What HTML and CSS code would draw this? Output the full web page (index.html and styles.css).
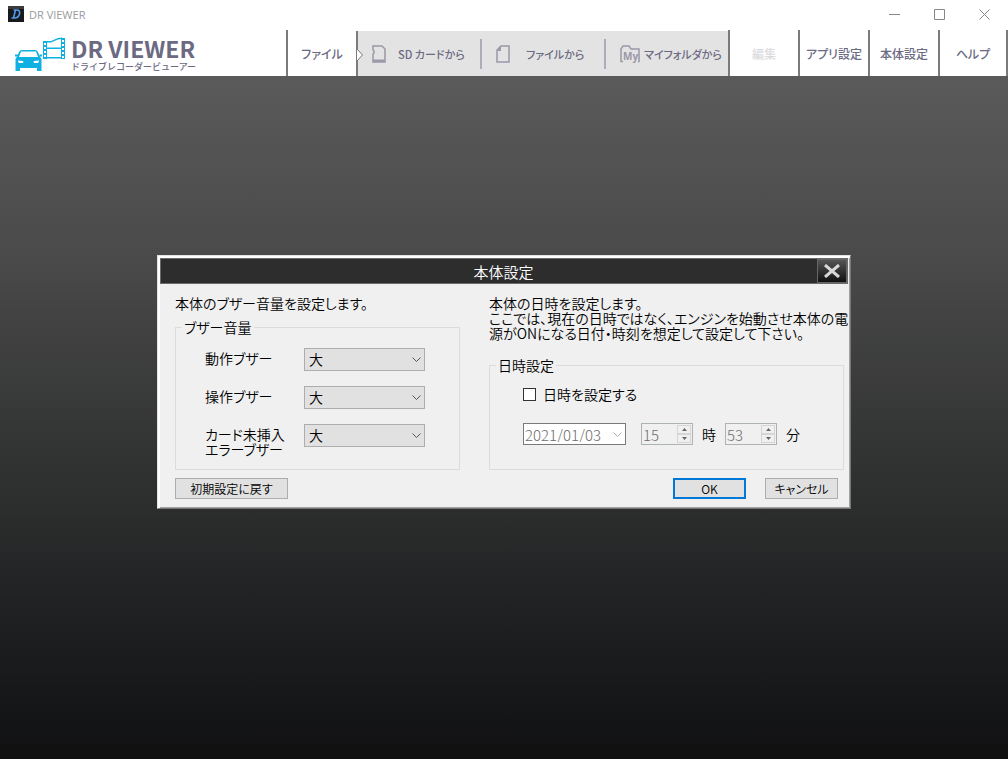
FILE: index.html
```html
<!DOCTYPE html>
<html lang="ja">
<head>
    <meta charset="UTF-8">
    <title>DR VIEWER</title>
    <link rel="stylesheet" href="styles.css">
</head>
<body>
<div class="titlebar">
    <svg class="app-icon" width="16" height="16" viewBox="0 0 16 16">
        <rect width="16" height="16" fill="#17191d"/>
        <path d="M0 0h16v3H0z" fill="#3a3c40"/>
        <path d="M5.500 4h3q4 0 3 4t-5 4H3.500M7.500 4l-2 8" fill="none" stroke="#4f9be8" stroke-width="1.600"/>
    </svg>
    <span class="app-name">DR VIEWER</span>
    <div class="win-btns">
        <button type="button" aria-label="最小化"><svg width="11" height="11"><path d="M0 5.500h11" stroke="#888"/></svg></button>
        <button type="button" aria-label="最大化"><svg width="11" height="11"><path d="M.5.5h10v10H.5z" fill="none" stroke="#888"/></svg></button>
        <button type="button" aria-label="閉じる"><svg width="11" height="11"><path d="M.5.5l10 10M10.500.5l-10 10" stroke="#888"/></svg></button>
    </div>
</div>
<div class="header">
    <div class="logo">
        <svg width="52" height="36" viewBox="0 0 52 36">
            <g fill="#0fb0e2">
                <path d="M7 14h13q2 0 3 2l2 5q1 .5 1.500 2v12H22v-3H5v3H.5V23Q1 21.500 2 21l2-5q1-2 3-2zM6 15.500L4 21h19l-2-5.500z" fill-rule="evenodd"/>
                <path d="M0 18.500h3v2H0zM24.500 18.500h2.500v2h-2.500z"/>
                <path d="M28 5h4v18h-4zM46 2h4v21h-4z"/>
                <path d="M31 5h5l7-3 4-.5V3l-4 .5L36 6.500h-5zM31 11.500h16V13H31zM31 21h16v1.500H31z"/>
            </g>
            <path d="M3 24.500l5 .5q1 1 0 2H4q-1-1-1-2.500zM24 24.500l-5 .5q-1 1 0 2h4q1-1 1-2.500z" fill="#fff"/>
            <path d="M30 7v15M48 4v18" stroke="#fff" stroke-width="2" stroke-dasharray="2 2"/>
        </svg>
        <div class="logo-text">
            <div class="logo-name">DR VIEWER</div>
            <div class="logo-sub">ドライブレコーダービューアー</div>
        </div>
    </div>
    <div class="menu">
        <button type="button" class="item">ファイル</button>
        <div class="submenu">
            <svg class="arrow" width="7" height="14" viewBox="0 0 7 14"><path d="M0 1l5.500 6L0 13" fill="#fff" stroke="#777"/></svg>
            <button type="button" class="sub sub-sd">
                <svg width="14" height="18" viewBox="0 0 14 18"><path d="M2 1h8l3 3v13H1v-8l1-1V6L1 5V1z" fill="none" stroke="#9b98a8" stroke-width="1.500"/><path d="M1 14.500h12V17H1z" fill="#9b98a8"/></svg>
                SD カードから
            </button>
            <button type="button" class="sub sub-file">
                <svg width="14" height="18" viewBox="0 0 14 18"><path d="M5 1h8v16H1V5z" fill="none" stroke="#9b98a8" stroke-width="1.500"/><path d="M5 1v5H1z" fill="#9b98a8"/></svg>
                ファイルから
            </button>
            <button type="button" class="sub sub-my">
                <svg width="20" height="18" viewBox="0 0 20 18"><path d="M3 16.500H1V4l2-3h6l2 3h8v12.500h-1" fill="none" stroke="#9b98a8" stroke-width="1.500"/><text class="my" x="3" y="15">My</text></svg>
                マイフォルダから
            </button>
        </div>
        <button type="button" class="item" disabled>編集</button>
        <button type="button" class="item">アプリ設定</button>
        <button type="button" class="item">本体設定</button>
        <button type="button" class="item item-last">ヘルプ</button>
    </div>
</div>
<div class="main">
    <form class="dialog">
        <div class="dialog-title">
            <span>本体設定</span>
            <button type="button" class="close" aria-label="閉じる"><svg width="18" height="14" viewBox="0 0 18 14"><path d="M2 1l14 12M16 1L2 13" stroke="#d8d8d8" stroke-width="3"/></svg></button>
        </div>
        <div class="dialog-body">
            <div class="col-buzzer">
                <p>本体のブザー音量を設定します。</p>
                <fieldset>
                    <legend>ブザー音量</legend>
                    <div class="buzzer">
                        <div class="row">
                            <label for="buzzer1">動作ブザー</label>
                            <span class="select"><select id="buzzer1"><option>大</option><option>中</option><option>小</option></select><svg width="9" height="5"><path d="M.5.5l4 4 4-4" fill="none" stroke="#555"/></svg></span>
                        </div>
                        <div class="row">
                            <label for="buzzer2">操作ブザー</label>
                            <span class="select"><select id="buzzer2"><option>大</option><option>中</option><option>小</option></select><svg width="9" height="5"><path d="M.5.5l4 4 4-4" fill="none" stroke="#555"/></svg></span>
                        </div>
                        <div class="row">
                            <label for="buzzer3">カード未挿入<br>エラーブザー</label>
                            <span class="select"><select id="buzzer3"><option>大</option><option>中</option><option>小</option></select><svg width="9" height="5"><path d="M.5.5l4 4 4-4" fill="none" stroke="#555"/></svg></span>
                        </div>
                    </div>
                </fieldset>
            </div>
            <div class="col-date">
                <p>本体の日時を設定します。<br>ここでは、現在の日時ではなく、エンジンを始動させ本体の電<br>源がONになる日付・時刻を想定して設定して下さい。</p>
                <fieldset>
                    <legend>日時設定</legend>
                    <div class="datetime">
                        <div class="check">
                            <input type="checkbox" id="setdate">
                            <label for="setdate">日時を設定する</label>
                        </div>
                        <div class="date-row">
                            <span class="select date"><select aria-label="日付" disabled><option>2021/01/03</option></select><svg width="9" height="5"><path d="M.5.5l4 4 4-4" fill="none" stroke="#aaa"/></svg></span>
                            <span class="spin">
                                <input type="text" id="hour" value="15" disabled>
                                <span class="spin-btns">
                                    <button type="button" aria-label="時を増やす" disabled><svg width="5" height="3"><path d="M0 3l2.500-3L5 3z" fill="#666"/></svg></button>
                                    <button type="button" aria-label="時を減らす" disabled><svg width="5" height="3"><path d="M0 0l2.500 3L5 0z" fill="#666"/></svg></button>
                                </span>
                            </span>
                            <label for="hour">時</label>
                            <span class="spin">
                                <input type="text" id="minute" value="53" disabled>
                                <span class="spin-btns">
                                    <button type="button" aria-label="分を増やす" disabled><svg width="5" height="3"><path d="M0 3l2.500-3L5 3z" fill="#666"/></svg></button>
                                    <button type="button" aria-label="分を減らす" disabled><svg width="5" height="3"><path d="M0 0l2.500 3L5 0z" fill="#666"/></svg></button>
                                </span>
                            </span>
                            <label for="minute">分</label>
                        </div>
                    </div>
                </fieldset>
            </div>
        </div>
        <div class="dialog-foot">
            <button type="button" class="btn btn-reset">初期設定に戻す</button>
            <button type="submit" class="btn btn-ok">OK</button>
            <button type="button" class="btn">キャンセル</button>
        </div>
    </form>
</div>
</body>
</html>
```
FILE: styles.css
```css
*{
    margin: 0;
    padding: 0;
    box-sizing: border-box;
}
body{
    display: flex;
    flex-direction: column;
    min-height: 100vh;
    background: #fff;
    font-family: "Noto Sans CJK JP", sans-serif;
    font-feature-settings: "palt";
}
button,input,select{
    font: inherit;
    font-feature-settings: inherit;
    color: inherit;
    border: 0;
    border-radius: 0;
    background: none;
}
svg{
    display: block;
    flex: none;
}

/* window title bar */
.titlebar{
    display: flex;
    align-items: center;
    height: 30px;
    padding: 0 1px 2px 8px;
}
.app-name{
    margin-left: 5px;
    font: 11px "Open Sans", sans-serif;
    color: #999;
}
.win-btns{
    display: flex;
    margin-left: auto;
}
.win-btns button{
    display: flex;
    justify-content: center;
    align-items: center;
    width: 45px;
    height: 28px;
}

/* header */
.header{
    display: flex;
    height: 46px;
    color: #6b6a82;
}
.logo{
    flex: 1;
    display: flex;
    padding: 6px 0 0 15px;
    gap: 4px;
}
.logo-name{
    font-size: 23px;
    font-weight: bold;
    line-height: 24px;
    white-space: nowrap;
}
.logo-sub{
    font-size: 9px;
    font-weight: 500;
    line-height: 13px;
    font-feature-settings: normal;
    white-space: nowrap;
}
.menu{
    display: flex;
    font-size: 12px;
    font-weight: 500;
}
.item{
    width: 70px;
    border-left: 2px solid #7b7b7b;
    white-space: nowrap;
}
.item:disabled{
    color: #dcdce0;
}
.item-last{
    border-right: 2px solid #7b7b7b;
}
.submenu{
    position: relative;
    display: flex;
    align-items: center;
    width: 372px;
    margin-top: 1px;
    border-left: 2px solid #7b7b7b;
    background: #e3e3e3;
    font-size: 11px;
}
.arrow{
    position: absolute;
    left: -1px;
    top: 17px;
}
.sub{
    flex: 1 1 0;
    min-width: 0;
    display: flex;
    align-items: center;
    gap: 12px;
    height: 30px;
    padding-left: 14px;
    white-space: nowrap;
}
.sub + .sub{
    border-left: 2px solid #aeacb8;
}
.sub-file{
    gap: 16px;
}
.sub-my{
    gap: 4px;
}
.my{
    font: bold 10px "Open Sans", sans-serif;
    fill: #9b98a8;
}

/* dialog */
.main{
    flex: 1;
    padding-top: 179px;
    background: linear-gradient(#5a5a5a, #4b4b4b 25%, #2b2c2c 64%, #17181a 90%, #101011);
}
.dialog{
    width: 694px;
    max-width: 100%;
    margin: 0 auto;
    border: 1px solid #e3e3e3;
    border-right-color: #777;
    border-bottom-color: #777;
    background: #f0f0f0;
    box-shadow: inset 2px 2px #fff, inset -1px -1px #a0a0a0;
    color: #000;
    font-size: 14px;
    line-height: 15px;
    font-weight: 350;
}
.dialog-title{
    display: flex;
    align-items: center;
    height: 26px;
    margin: 2px 2px 0 2px;
    padding-left: 29px;
    border: 1px solid #6a696b;
    background: #2d2d2d;
    color: #fff;
    font-size: 15px;
}
.dialog-title span{
    flex: 1;
    text-align: center;
}
.close{
    display: flex;
    justify-content: center;
    align-items: center;
    width: 30px;
    height: 24px;
    border: 1px solid #666;
    background: linear-gradient(#555, #111);
}
.dialog-body{
    display: flex;
    gap: 29px;
    padding: 12px 6px 0 17px;
}
.col-buzzer,.col-date{
    display: flex;
    flex-direction: column;
}
.col-buzzer{
    flex: none;
    width: 285px;
    gap: 9px;
}
.col-date{
    flex: 1;
    min-width: 0;
    gap: 17px;
    white-space: nowrap;
}
fieldset{
    flex: 1;
    min-width: 0;
    border: 1px solid #dcdcdc;
}
legend{
    margin-left: 6px;
    padding: 0 2px;
}
.buzzer{
    padding: 13px 0 7px 29px;
}
.row{
    display: flex;
    height: 38px;
}
.row label{
    width: 99px;
    padding-top: 3px;
}
.select{
    position: relative;
    display: block;
    width: 121px;
    height: 23px;
}
.select select{
    display: block;
    width: 100%;
    height: 100%;
    padding-left: 4px;
    border: 1px solid #adadad;
    background: #e1e1e1;
    appearance: none;
}
.select svg{
    position: absolute;
    right: 4px;
    top: 9px;
    pointer-events: none;
}
.datetime{
    padding: 14px 0 0 33px;
}
.check{
    display: flex;
    align-items: center;
    gap: 7px;
}
.check input{
    width: 13px;
    height: 13px;
    border: 1px solid #333;
    background: #fff;
    appearance: none;
}
.date-row{
    display: flex;
    align-items: center;
    gap: 9px;
    padding-top: 21px;
}
.date{
    width: 103px;
    height: 22px;
    margin-right: 6px;
}
.date select{
    padding-left: 1px;
    border-color: #7a7a7a;
    background: #fff;
    color: #6d6d6d;
    font-size: 15px;
    font-weight: 300;
    opacity: 1;
}
.spin{
    display: flex;
    width: 52px;
    height: 22px;
    padding: 1px;
    border: 1px solid #adb2b5;
}
.spin input{
    flex: 1;
    width: 0;
    color: #6d6d6d;
    font-size: 15px;
    font-weight: 300;
}
.spin-btns{
    display: flex;
    flex-direction: column;
    width: 14px;
}
.spin-btns button{
    flex: 1;
    display: flex;
    justify-content: center;
    align-items: center;
    border: 1px solid #d5d5d5;
}
.dialog-foot{
    display: flex;
    gap: 19px;
    padding: 8px 12px 9px 17px;
}
.btn{
    width: 73px;
    height: 21px;
    border: 1px solid #adadad;
    background: #e1e1e1;
    font-size: 12px;
    line-height: 12px;
}
.btn-reset{
    width: 113px;
    margin-right: auto;
}
.btn-ok{
    border: 2px solid #0078d7;
}
```
